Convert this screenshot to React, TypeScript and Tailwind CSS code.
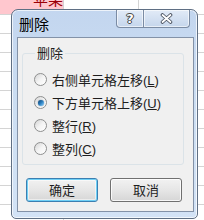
const cjk = { fontFamily: '"Noto Sans CJK SC", "Noto Sans", sans-serif' };

const options = [
  { label: '右侧单元格左移', key: 'L' },
  { label: '下方单元格上移', key: 'U' },
  { label: '整行', key: 'R' },
  { label: '整列', key: 'C' },
];

const Radio = ({ checked }: { checked: boolean }) => (
  <span className="flex h-[13px] w-[13px] shrink-0 items-center justify-center rounded-full border border-[#8e8f8f] bg-gradient-to-br from-[#d4d4d4] via-[#f4f4f4] to-white">
    {checked && (
      <span className="h-[6px] w-[6px] rounded-full bg-gradient-to-br from-[#0d3f6e] via-[#2a7fc0] to-[#8fd6ff] shadow-[0_0_1px_#0b3a66]" />
    )}
  </span>
);

const SheetRow = ({ h }: { h: string }) => (
  <div className={`flex ${h} border-b border-[#d4d4d4]`}>
    <div className="w-[64px] border-r border-[#d4d4d4]" />
    <div className="w-[75px] border-r border-[#d4d4d4]" />
    <div className="flex-1" />
  </div>
);

export default function App() {
  return (
    <div className="relative h-[220px] w-[204px] overflow-hidden bg-white" style={cjk}>
      {/* Spreadsheet behind the dialog */}
      <div className="flex flex-col">
        <div className="flex h-[15px] border-b border-[#d4d4d4]">
          <div className="w-[64px] overflow-hidden border-r border-[#d4d4d4] bg-[#ffc7ce]">
            <div className="-mt-[10px] pl-[33px] text-[15px] leading-[18px] text-[#9c0006]">苹果</div>
          </div>
          <div className="w-[75px] border-r border-[#d4d4d4]" />
          <div className="flex-1" />
        </div>
        {Array.from({ length: 11 }).map((_, i) => (
          <SheetRow key={i} h="h-[19px]" />
        ))}
      </div>

      {/* Dialog window */}
      <div className="absolute left-[11px] top-[9px] flex h-[210px] w-[187px] flex-col rounded-t-[7px] rounded-b-[5px] border border-[#5f6f84] bg-gradient-to-b from-[#c3d6ef] via-[#cddff3] to-[#d3e3f6] shadow-[inset_0_0_0_1px_rgba(255,255,255,0.7)]">
        {/* Title bar */}
        <div className="flex h-[27px] shrink-0 items-start">
          <div className="pl-[7px] pt-[5px] text-[15px] leading-[17px] text-black">删除</div>
          <div className="ml-auto mr-[7px] flex h-[18px]">
            <div className="flex w-[28px] items-center justify-center rounded-bl-[4px] border border-t-0 border-[#7b8ca4] bg-gradient-to-b from-[#e2ebf7] to-[#c5d6ec] shadow-[inset_0_0_0_1px_rgba(255,255,255,0.6)]">
              <span
                className="text-[13px] font-bold leading-none text-white [text-shadow:0_0_1px_#333,0_0_1px_#333,1px_0_0_#555,-1px_0_0_#555,0_1px_0_#555,0_-1px_0_#555]"
                style={{ fontFamily: '"DejaVu Sans", sans-serif' }}
              >
                ?
              </span>
            </div>
            <div className="flex w-[46px] items-center justify-center rounded-br-[4px] border border-l-0 border-t-0 border-[#7b8ca4] bg-gradient-to-b from-[#e2ebf7] to-[#c5d6ec] shadow-[inset_0_0_0_1px_rgba(255,255,255,0.6)]">
              <svg width="13" height="11" viewBox="0 0 13 11">
                <path d="M2.5 2 L10.5 9 M10.5 2 L2.5 9" stroke="#4a5260" strokeWidth="3.6" strokeLinecap="round" />
                <path d="M2.5 2 L10.5 9 M10.5 2 L2.5 9" stroke="#ffffff" strokeWidth="1.8" strokeLinecap="round" />
              </svg>
            </div>
          </div>
        </div>

        {/* Client area */}
        <div className="mb-[6px] ml-[5px] mr-[3px] flex flex-1 flex-col border border-[#8392a8] bg-[#f0f0f0]">
          <fieldset className="ml-[4px] mr-[9px] mt-[8px] rounded-[3px] border border-[#dbe3e8] pb-[4px] pl-[11px] pt-[8px]">
            <legend className="ml-[1px] px-[2px] text-[13px] leading-[14px] text-[#1e1e1e]">删除</legend>
            {options.map((o, i) => (
              <div key={o.key} className="flex h-[23px] items-center gap-[5px] text-[13px] text-[#1e1e1e]">
                <Radio checked={i === 1} />
                <span className="leading-[15px]">
                  {o.label}
                  <span style={{ fontFamily: '"Liberation Sans", sans-serif' }}>
                    (<span className="underline">{o.key}</span>)
                  </span>
                </span>
              </div>
            ))}
          </fieldset>

          <div className="ml-[8px] mt-[13px] flex gap-[12px]">
            <button className="flex h-[24px] w-[72px] items-center justify-center rounded-[3px] border border-[#3c7fb1] bg-gradient-to-b from-[#f2f2f2] via-[#e6e6e6] to-[#d6d6d6] text-[13px] text-[#1e1e1e] shadow-[inset_0_0_0_1px_#6fd0f6,inset_0_0_0_2px_rgba(255,255,255,0.5)]">
              确定
            </button>
            <button className="flex h-[24px] w-[72px] items-center justify-center rounded-[3px] border border-[#707070] bg-gradient-to-b from-[#f2f2f2] via-[#e6e6e6] to-[#d6d6d6] text-[13px] text-[#1e1e1e] shadow-[inset_0_0_0_1px_rgba(255,255,255,0.8)]">
              取消
            </button>
          </div>
        </div>
      </div>
    </div>
  );
}
